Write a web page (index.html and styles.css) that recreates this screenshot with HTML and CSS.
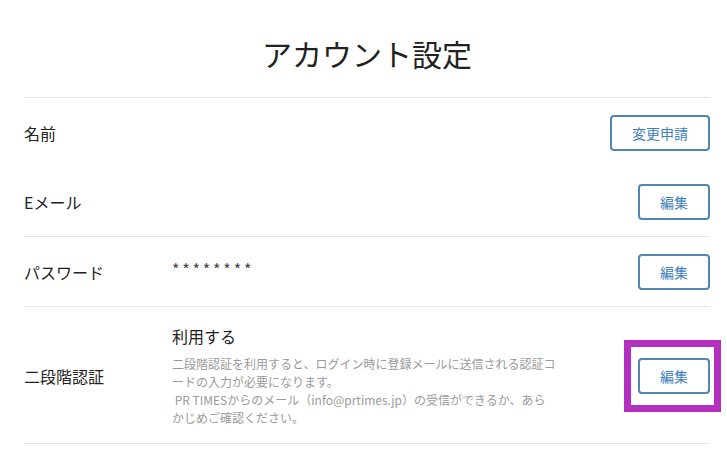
FILE: index.html
```html
<!DOCTYPE html>
<html>
<head>
    <title>アカウント設定</title>
    <link rel="stylesheet" href="styles.css">
</head>
<body>
    <div class="container">
        <h1 class="page-title">アカウント設定</h1>
        <div class="settings">
            <div class="row no-border">
                <div class="label">名前</div>
                <div class="value"></div>
                <button class="btn">変更申請</button>
            </div>
            <div class="row">
                <div class="label">Eメール</div>
                <div class="value"></div>
                <button class="btn">編集</button>
            </div>
            <div class="row">
                <div class="label">パスワード</div>
                <div class="value password">********</div>
                <button class="btn">編集</button>
            </div>
            <div class="row">
                <div class="label">二段階認証</div>
                <div class="value">
                    <p class="status">利用する</p>
                    <p class="note">二段階認証を利用すると、ログイン時に登録メールに送信される認証コードの入力が必要になります。<br>&nbsp;PR TIMESからのメール（info@prtimes.jp）の受信ができるか、あら<br>かじめご確認ください。</p>
                </div>
                <span class="highlight"><button class="btn">編集</button></span>
            </div>
        </div>
    </div>
</body>
</html>
```

FILE: styles.css
```css
body {
    margin: 0;
    background: #fff;
    color: #222;
    font-family: "Noto Sans CJK JP", "Noto Sans", sans-serif;
}
.container {
    width: 686px;
    margin-left: 24px;
}
.page-title {
    margin: 33px 0 24px;
    font-size: 30px;
    font-weight: normal;
    line-height: 40px;
    text-align: center;
}
.settings {
    border-top: 1px solid #e6e6e6;
}
.row {
    display: flex;
    align-items: center;
    padding: 17px 0 16px;
    border-bottom: 1px solid #e6e6e6;
}
.row.no-border {
    border-bottom: none;
}
.label {
    width: 148px;
    flex-shrink: 0;
    font-size: 16px;
    line-height: 24px;
}
.value {
    flex: 1;
    font-size: 16px;
    line-height: 24px;
}
.password {
    color: #444;
    letter-spacing: 2.8px;
    align-self: flex-start;
    margin-top: 3px;
}
.status {
    margin: 0 0 7px;
}
.note {
    width: 386px;
    margin: 0;
    color: #9a9a9a;
    font-size: 12px;
    line-height: 18px;
}
.btn {
    box-sizing: border-box;
    height: 36px;
    padding: 0 20px;
    border: 2px solid #5286b4;
    border-radius: 4px;
    background: #fff;
    color: #3f7fc0;
    font-family: inherit;
    font-size: 14px;
    line-height: 32px;
    cursor: pointer;
}
.highlight {
    position: relative;
    display: inline-block;
}
.highlight::after {
    content: "";
    position: absolute;
    left: -14px;
    right: -11px;
    top: -18px;
    bottom: -18px;
    border: 7px solid #b32fc0;
    pointer-events: none;
}
```
